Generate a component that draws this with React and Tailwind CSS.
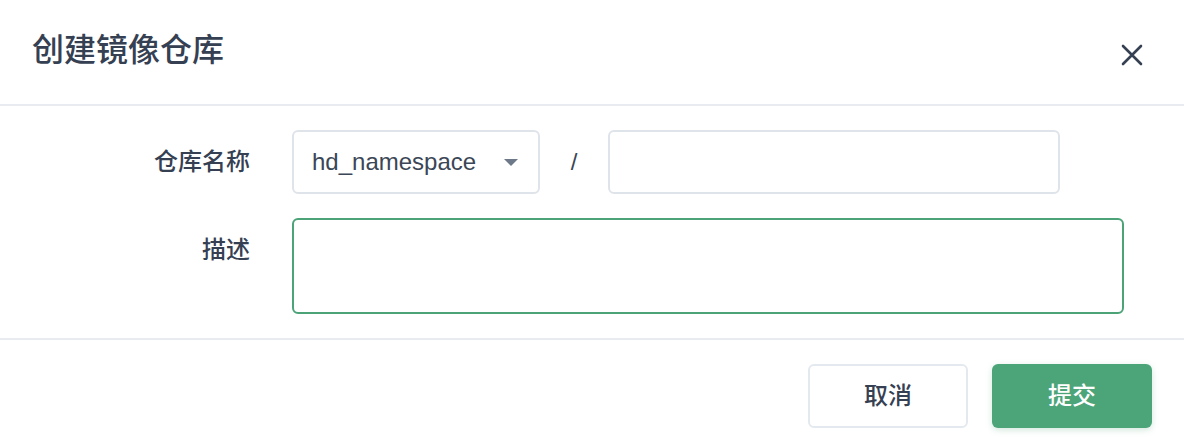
export default function App() {
  const font = { fontFamily: '"Liberation Sans", "Noto Sans CJK SC", sans-serif' };

  return (
    <div className="w-[1184px] h-[440px] bg-white overflow-hidden text-[#354052]" style={font}>
      {/* header */}
      <div className="h-[106px] border-b-2 border-[#e8ecf0] flex justify-between items-start pl-8 pr-[40px]">
        <h1 className="mt-[26px] text-[32px] leading-[48px] font-medium text-[#354052]">创建镜像仓库</h1>
        <button className="mt-[43px] w-6 h-6 text-[#354052]">
          <svg viewBox="0 0 24 24" width="24" height="24" fill="none" stroke="currentColor" strokeWidth="2.6" strokeLinecap="round">
            <path d="M3 3 L21 21 M21 3 L3 21" />
          </svg>
        </button>
      </div>

      {/* body */}
      <div className="border-b-2 border-[#e8ecf0] pt-6 pb-6">
        <div className="grid grid-cols-[250px_1fr] gap-x-[42px] gap-y-6">
          <label className="text-right text-[24px] leading-[64px] font-medium">仓库名称</label>
          <div className="flex items-center">
            <div className="w-[248px] h-[64px] border-2 border-[#dfe4eb] rounded-md flex items-center justify-between pl-[18px] pr-[20px]">
              <span className="text-[24px] text-[#3b4656]">hd_namespace</span>
              <span className="w-0 h-0 border-l-[7px] border-r-[7px] border-t-[7px] border-l-transparent border-r-transparent border-t-[#6d7888]" />
            </div>
            <span className="w-[68px] text-center text-[24px] text-[#3b4656]">/</span>
            <input className="w-[452px] h-[64px] border-2 border-[#dfe4eb] rounded-md outline-none px-4 text-[24px]" />
          </div>

          <label className="text-right text-[24px] leading-[64px] font-medium">描述</label>
          <textarea className="w-[832px] h-[96px] border-2 border-[#4ba377] rounded-md outline-none resize-none px-4 py-3 text-[24px]" />
        </div>
      </div>

      {/* footer */}
      <div className="flex justify-end gap-6 pt-6 pr-8">
        <button className="w-[160px] h-[64px] border-2 border-[#e4e9ef] rounded-md bg-white text-[24px] font-medium text-[#354052]">
          取消
        </button>
        <button className="w-[160px] h-[64px] rounded-md bg-[#4ca479] text-[24px] font-medium text-white shadow-[0_2px_6px_rgba(76,164,121,0.25)]">
          提交
        </button>
      </div>
    </div>
  );
}
